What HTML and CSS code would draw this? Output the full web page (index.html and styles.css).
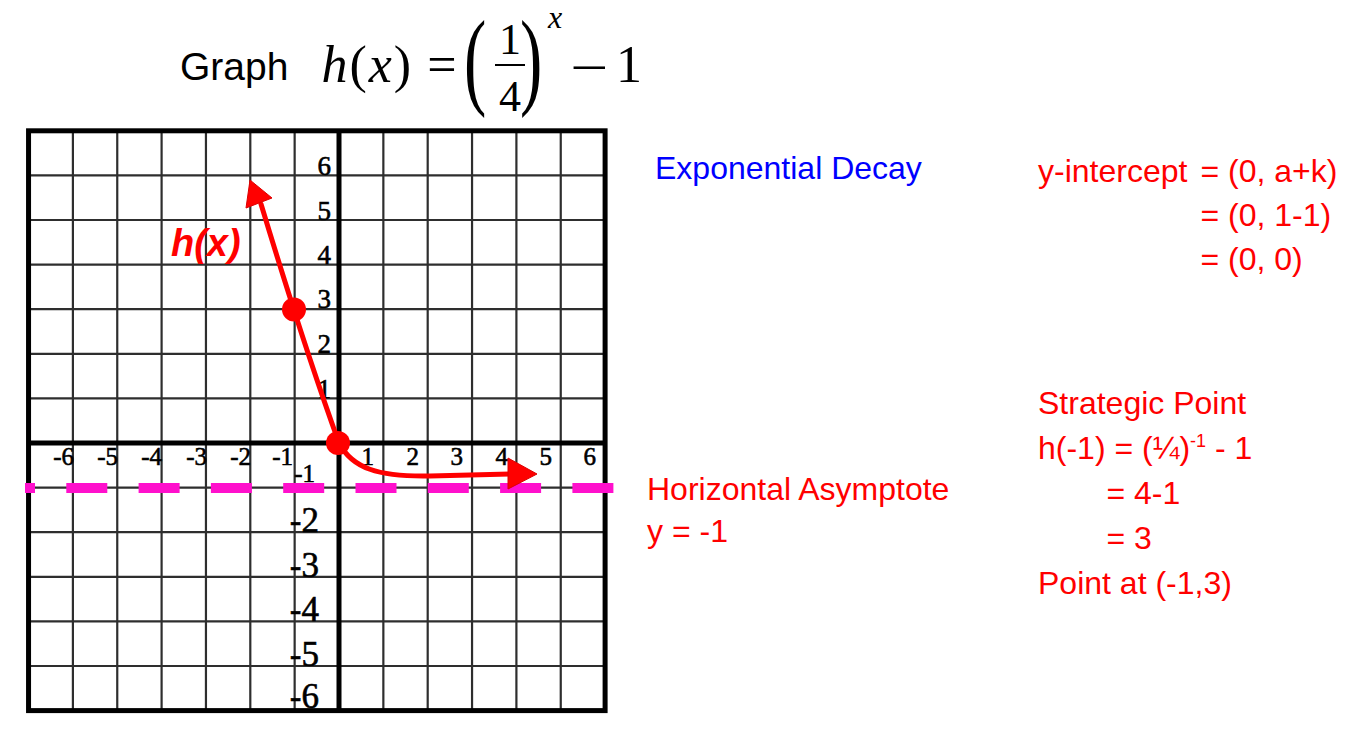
FILE: index.html
```html
<!DOCTYPE html>
<html lang="en">
<head>
<meta charset="utf-8">
<title>Graph h(x)</title>
<link rel="stylesheet" href="styles.css">
</head>
<body>
<div class="title">
  <span class="word">Graph</span>
  <span class="math">
    <span class="m-main hx"><span class="mi">h</span>(<span class="mi">x</span>)</span>
    <span class="m-main eq">=</span>
    <span class="bigp">(</span>
    <span class="frac"><span class="num">1</span><span class="den">4</span></span>
    <span class="bigp rp">)</span>
    <span class="sup mi">x</span>
    <span class="m-main minus">−</span>
    <span class="m-main one">1</span>
  </span>
</div>

<div class="main">
  <svg class="graph" viewBox="20 120 600 600" width="600" height="600" xmlns="http://www.w3.org/2000/svg">
    <g class="grid">
      <line x1="72.9" y1="130.8" x2="72.9" y2="710.6"/>
      <line x1="117.25" y1="130.8" x2="117.25" y2="710.6"/>
      <line x1="161.6" y1="130.8" x2="161.6" y2="710.6"/>
      <line x1="205.95" y1="130.8" x2="205.95" y2="710.6"/>
      <line x1="250.3" y1="130.8" x2="250.3" y2="710.6"/>
      <line x1="294.65" y1="130.8" x2="294.65" y2="710.6"/>
      <line x1="383.35" y1="130.8" x2="383.35" y2="710.6"/>
      <line x1="427.7" y1="130.8" x2="427.7" y2="710.6"/>
      <line x1="472.05" y1="130.8" x2="472.05" y2="710.6"/>
      <line x1="516.4" y1="130.8" x2="516.4" y2="710.6"/>
      <line x1="560.75" y1="130.8" x2="560.75" y2="710.6"/>
      <line x1="28.55" y1="175.4" x2="605.1" y2="175.4"/>
      <line x1="28.55" y1="220" x2="605.1" y2="220"/>
      <line x1="28.55" y1="264.6" x2="605.1" y2="264.6"/>
      <line x1="28.55" y1="309.2" x2="605.1" y2="309.2"/>
      <line x1="28.55" y1="353.8" x2="605.1" y2="353.8"/>
      <line x1="28.55" y1="398.4" x2="605.1" y2="398.4"/>
      <line x1="28.55" y1="487.6" x2="605.1" y2="487.6"/>
      <line x1="28.55" y1="532.2" x2="605.1" y2="532.2"/>
      <line x1="28.55" y1="576.8" x2="605.1" y2="576.8"/>
      <line x1="28.55" y1="621.4" x2="605.1" y2="621.4"/>
      <line x1="28.55" y1="666" x2="605.1" y2="666"/>
    </g>
    <rect class="frame" x="28.55" y="130.8" width="576.55" height="579.8"/>
    <line class="axis" x1="28.55" y1="443" x2="605.1" y2="443"/>
    <line class="axis" x1="339" y1="130.8" x2="339" y2="710.6"/>

    <g class="xlab">
      <text x="74" y="465">-6</text>
      <text x="118" y="465">-5</text>
      <text x="162" y="465">-4</text>
      <text x="207" y="465">-3</text>
      <text x="251" y="465">-2</text>
      <text x="293" y="465">-1</text>
      <text x="374" y="465">1</text>
      <text x="419" y="465">2</text>
      <text x="463" y="465">3</text>
      <text x="508" y="465">4</text>
      <text x="552" y="465">5</text>
      <text x="596" y="465">6</text>
    </g>
    <g class="ylab">
      <text x="331" y="175">6</text>
      <text x="331" y="219.5">5</text>
      <text x="331" y="264">4</text>
      <text x="331" y="308">3</text>
      <text x="331" y="353">2</text>
      <text x="331" y="397.5">1</text>
      <text class="neg1" x="315" y="482">-1</text>
      <text class="neg" x="319" y="532">-2</text>
      <text class="neg" x="319" y="576.5">-3</text>
      <text class="neg" x="319" y="621">-4</text>
      <text class="neg" x="319" y="665.5">-5</text>
      <text class="neg" x="319" y="708">-6</text>
    </g>

    <line class="asymptote" x1="25" y1="488" x2="614" y2="488"/>

    <path class="curve" d="M 261 204 C 284 280, 318 385, 339 443 C 352 468, 378 477, 430 476 L 512 474"/>
    <polygon class="arrow" points="250,180 246,208 272,198"/>
    <polygon class="arrow" points="508,458 537,474 508,489"/>
    <circle class="dot" cx="294" cy="309.5" r="12"/>
    <circle class="dot" cx="338" cy="443" r="12"/>
    <text class="fname" x="171" y="256">h(x)</text>
  </svg>

  <div class="mid">
    <p class="decay">Exponential Decay</p>
    <div class="asym">
      <p>Horizontal Asymptote</p>
      <p>y = -1</p>
    </div>
  </div>

  <div class="right">
    <div class="yint">
      <span>y-intercept</span><span>= (0, a+k)</span>
      <span class="c2">= (0, 1-1)</span>
      <span class="c2">= (0, 0)</span>
    </div>
    <div class="strat">
      <p>Strategic Point</p>
      <p>h(-1) = (¼)<span class="sp">-1</span> - 1</p>
      <p class="indent">= 4-1</p>
      <p class="indent">= 3</p>
      <p>Point at (-1,3)</p>
    </div>
  </div>
</div>
</body>
</html>
```

FILE: styles.css
```css
html, body {
  margin: 0;
  padding: 0;
  background: #ffffff;
}
body {
  width: 1359px;
  height: 735px;
  overflow: hidden;
  font-family: "Liberation Sans", Arial, sans-serif;
  color: #000;
}
p { margin: 0; }

/* ---------- title ---------- */
.title {
  display: flex;
  align-items: flex-start;
  height: 120px;
  padding-left: 180px;
  box-sizing: border-box;
}
.word {
  font-family: "Liberation Sans", Arial, sans-serif;
  font-size: 39px;
  line-height: 1;
  margin-top: 47px;
}
.math {
  display: flex;
  align-items: flex-start;
  font-family: "Liberation Serif", "Times New Roman", serif;
  margin-left: 33px;
}
.mi { font-style: italic; }
.m-main {
  font-size: 52px;
  line-height: 1;
  margin-top: 38.5px;
}
.hx { letter-spacing: 2px; }
.eq { margin-left: 14px; }
.bigp {
  display: inline-block;
  width: 20px;
  font-size: 108px;
  line-height: 1;
  margin-top: 5px;
  margin-left: 7.5px;
  transform: scaleX(0.62);
  transform-origin: left top;
}
.rp { margin-left: -5px; }
.frac {
  display: flex;
  flex-direction: column;
  align-items: stretch;
  width: 30px;
  margin-left: 11px;
  margin-top: 18px;
  font-size: 44px;
  line-height: 44px;
  text-align: center;
}
.num {
  display: block;
  height: 46px;
  border-bottom: 2.5px solid #000000;
  line-height: 44px;
}
.den {
  display: block;
  margin-top: 8.5px;
}
.sup {
  font-size: 32px;
  line-height: 0.8;
  margin-top: 5px;
  margin-left: 8px;
}
.minus {
  display: inline-block;
  margin-left: 7.5px;
  margin-top: 42px;
  transform: scaleX(1.3);
  transform-origin: left top;
}
.one { margin-left: 17px; }

/* ---------- main row ---------- */
.main {
  display: flex;
  align-items: flex-start;
}
.graph {
  display: block;
  flex: none;
  margin-left: 20px;
}
.grid line {
  stroke: #2e2e2e;
  stroke-width: 2.2;
}
.frame {
  fill: none;
  stroke: #000;
  stroke-width: 5;
}
.axis {
  stroke: #000;
  stroke-width: 5;
}
.xlab text, .ylab text {
  font-family: "Liberation Serif", "Times New Roman", serif;
  font-size: 25px;
  fill: #000;
  stroke: #000;
  stroke-width: 0.6;
  text-anchor: end;
}
.ylab text { font-size: 27px; }
.ylab .neg1 { font-size: 25px; }
.ylab .neg { font-size: 35px; }
.asymptote {
  stroke: #ff10cc;
  stroke-width: 10;
  stroke-dasharray: 41 31.3;
  stroke-dashoffset: 31;
}
.curve {
  fill: none;
  stroke: #ff0000;
  stroke-width: 5;
  stroke-linecap: round;
  stroke-linejoin: round;
}
.arrow {
  fill: #ff0000;
  stroke: #dd0000;
  stroke-width: 1;
  stroke-linejoin: round;
}
.dot { fill: #ff0000; }
.fname {
  font-family: "Liberation Sans", Arial, sans-serif;
  font-size: 38px;
  font-weight: bold;
  font-style: italic;
  fill: #ff0000;
}

.mid {
  flex: none;
  width: 364px;
  margin-left: 27px;
  padding-top: 26px;
  font-size: 32px;
}
.decay {
  color: #0000ff;
  line-height: 44px;
  margin-left: 8px;
}
.asym {
  color: #ff0000;
  line-height: 42px;
  margin-top: 278px;
}

.right {
  flex: none;
  margin-left: 27px;
  padding-top: 29px;
  font-size: 32px;
  color: #ff0000;
}
.yint {
  display: grid;
  grid-template-columns: 162.4px auto;
  line-height: 44px;
  white-space: nowrap;
}
.yint .c2 { grid-column: 2; }
.strat {
  margin-top: 100px;
  line-height: 45px;
  white-space: nowrap;
}
.indent { padding-left: 68.4px; }
.sp {
  font-size: 18px;
  line-height: 0;
  vertical-align: 12px;
}
```
